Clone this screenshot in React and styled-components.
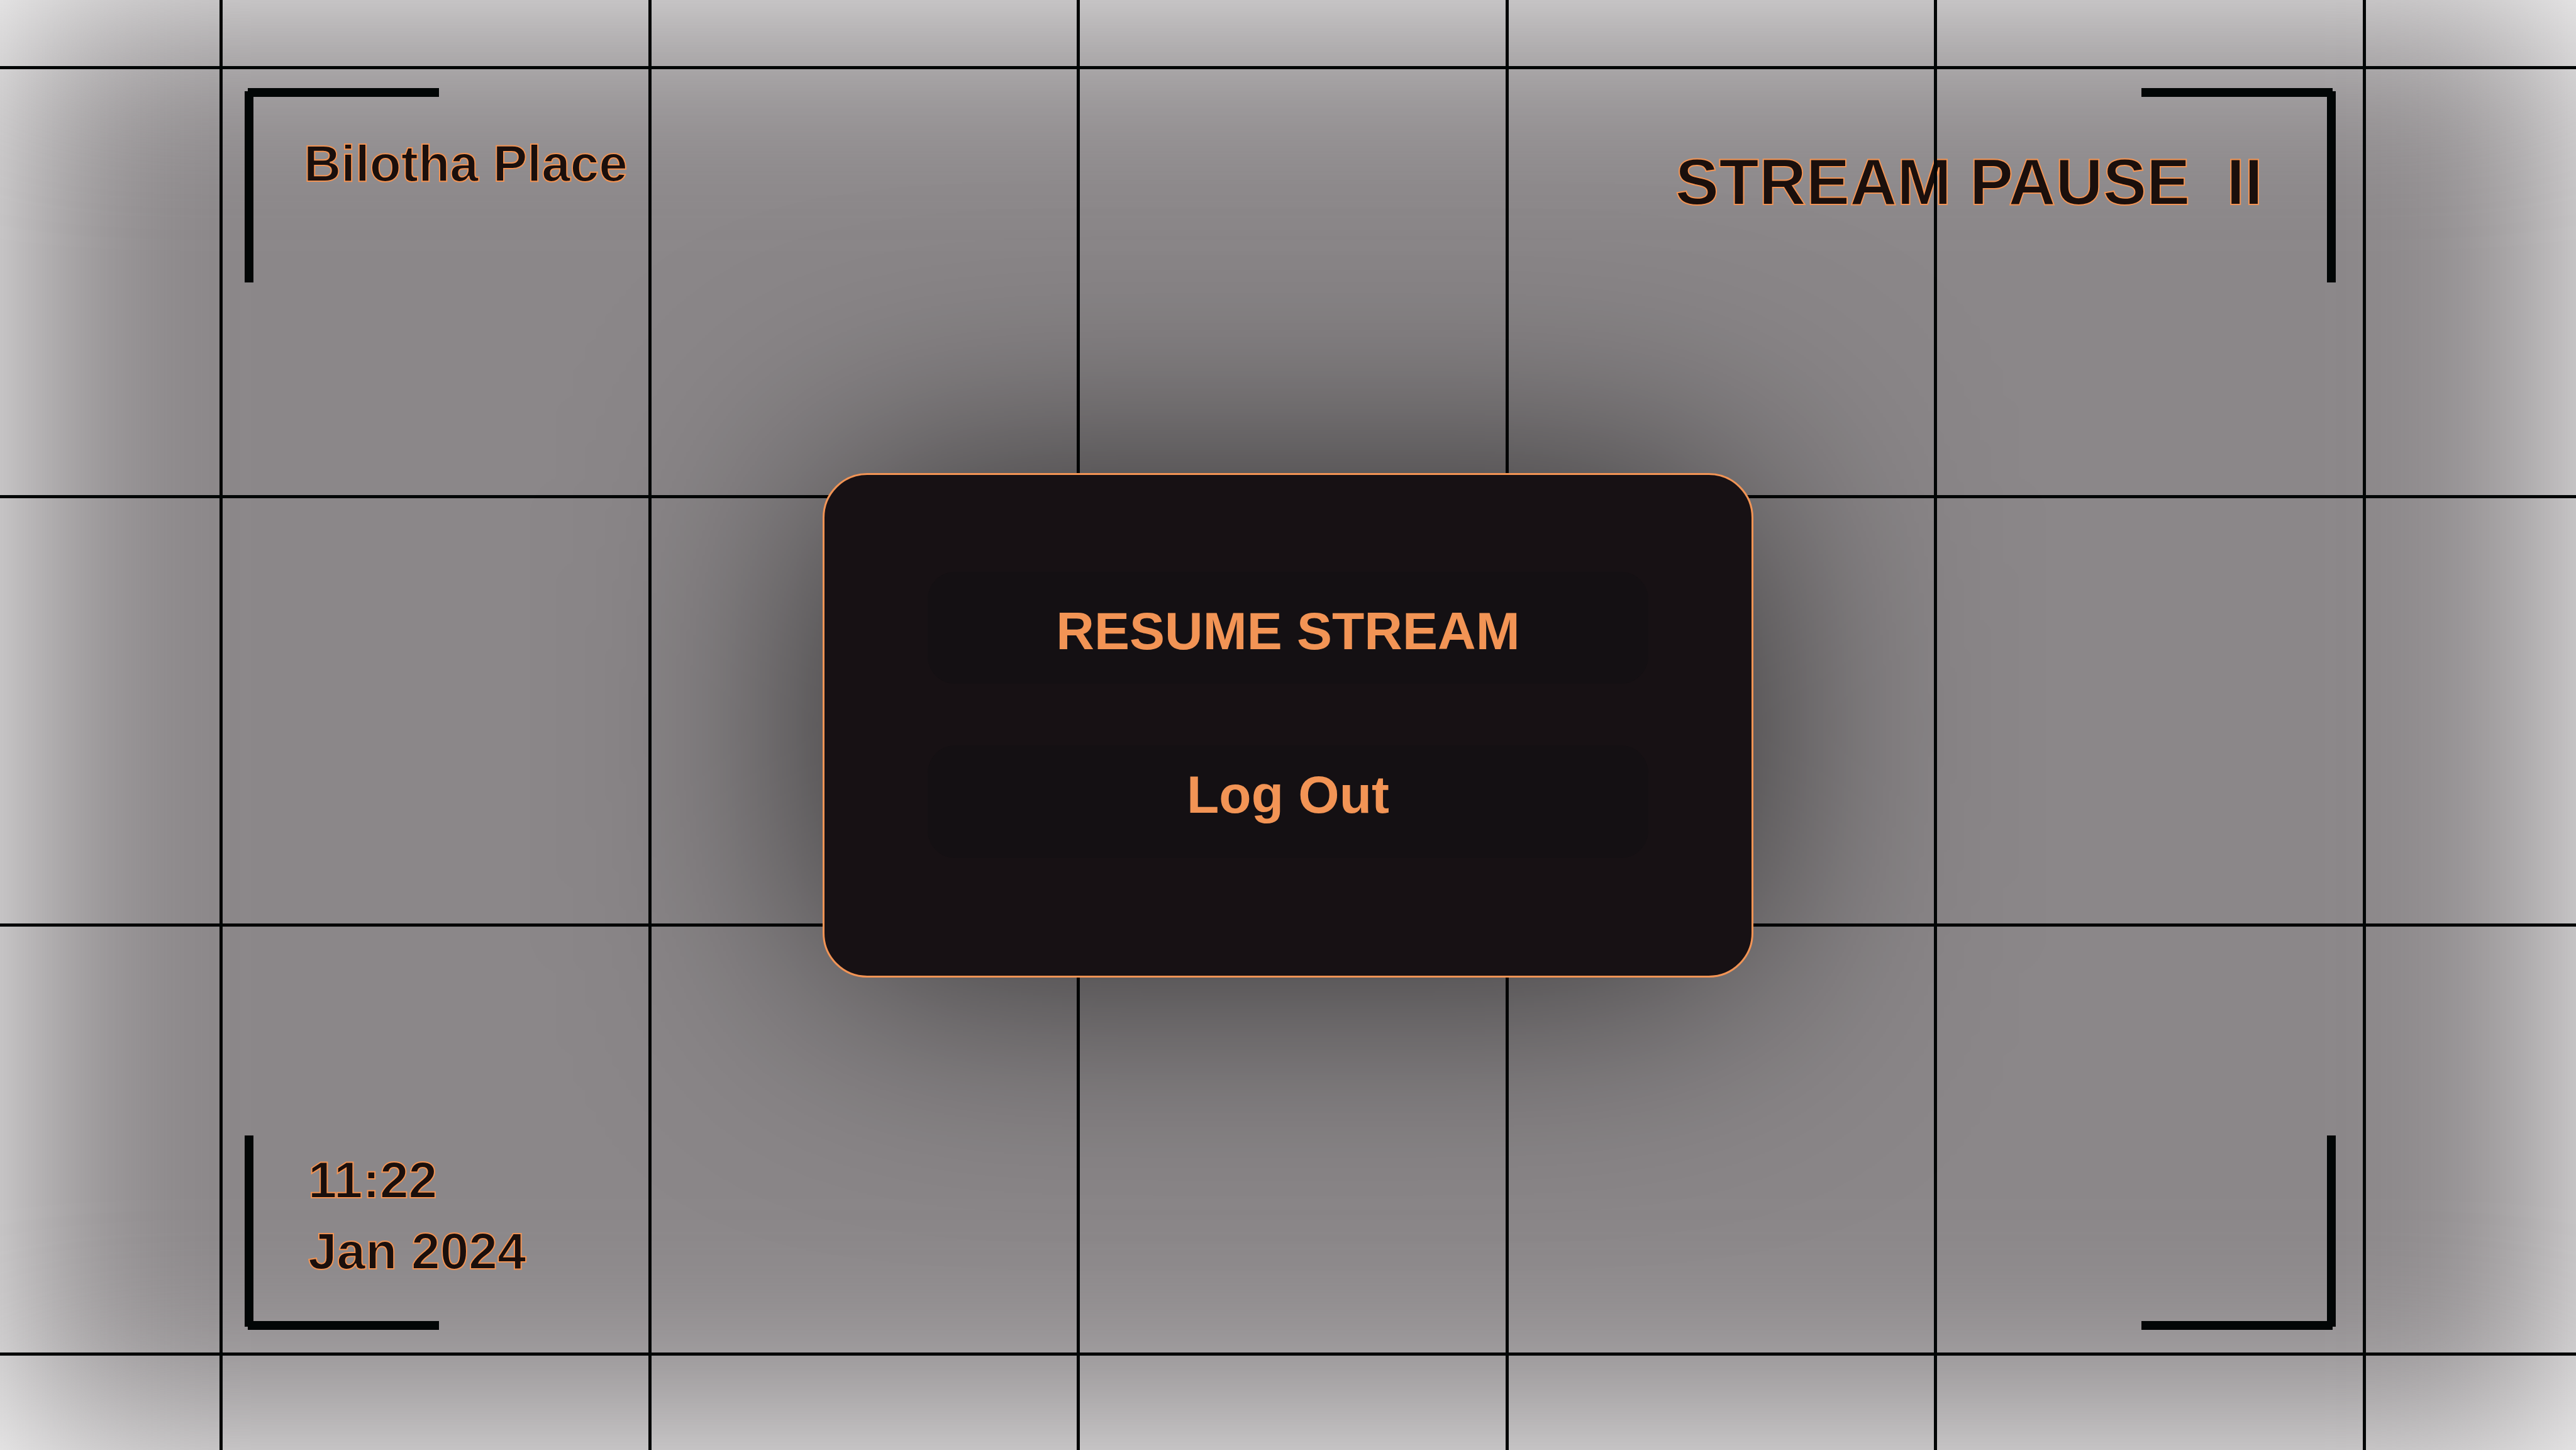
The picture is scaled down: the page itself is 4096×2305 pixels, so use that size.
import React from "react";
import styled, { createGlobalStyle } from "styled-components";

const color = {
  ink: "#020606",
  text: "#1a0f0c",
  accent: "#f29455",
  backdrop: "#8b8789",
  card: "#171114",
  button: "#141013",
};

const GlobalStyle = createGlobalStyle`
  *, *::before, *::after { box-sizing: border-box; }
  body {
    margin: 0;
    font-family: "Liberation Sans", Arial, sans-serif;
    font-weight: 700;
  }
  h1, p { margin: 0; font-size: inherit; font-weight: inherit; }
`;

const Page = styled.main`
  display: grid;
  min-height: 100vh;
  overflow: hidden;
  background: #fff;

  > * {
    grid-area: 1 / 1;
  }
`;

const Backdrop = styled.div`
  background: ${color.backdrop};
  filter: blur(165px);
`;

const Hud = styled.div`
  position: relative;
  display: flex;
  flex-direction: column;
  justify-content: space-between;
  padding: 140px 382px 191px 389px;
`;

const HudRow = styled.div`
  display: flex;
  justify-content: space-between;
`;

const Corner = styled.section`
  display: grid;
  justify-items: ${(p) => (p.$side === "right" ? "end" : "start")};

  > * {
    grid-area: 1 / 1;
  }
`;

const BracketSvg = styled.svg`
  display: block;
  width: 309px;
  height: 309px;
  fill: ${color.ink};
`;

const OutlinedText = styled.div`
  color: ${color.text};
  -webkit-text-stroke: 2px ${color.accent};
  white-space: pre;
`;

const PlaceName = styled(OutlinedText).attrs({ as: "p" })`
  padding: 72px 0 0 94px;
  font-size: 82px;
  line-height: 96px;
`;

const Status = styled(OutlinedText).attrs({ as: "h1" })`
  padding: 89px 116px 0 0;
  font-size: 104px;
  line-height: 120px;
`;

const Clock = styled(OutlinedText)`
  display: flex;
  flex-direction: column;
  align-self: end;
  padding: 0 0 69px 101px;
  font-size: 82px;
  line-height: 113px;
`;

const Lines = styled.div`
  position: relative;
  display: flex;
  flex-direction: ${(p) => (p.$rows ? "column" : "row")};
  justify-content: space-between;
  padding: ${(p) => (p.$rows ? "105px 0 150px" : "0 334px 0 349px")};
  pointer-events: none;
`;

const Line = styled.span`
  flex: 0 0 5px;
  background: ${color.ink};
`;

const CardArea = styled.div`
  position: relative;
  place-self: center;
  width: 1480px;

  &::before {
    content: "";
    position: absolute;
    inset: 0;
    border-radius: 71px;
    background: rgba(0, 0, 0, 0.67);
    filter: blur(200px);
  }
`;

const Card = styled.div`
  position: relative;
  display: flex;
  flex-direction: column;
  gap: 98px;
  padding: 154px 164px 187px;
  border: 3px solid ${color.accent};
  border-radius: 71px;
  background: ${color.card};
`;

const MenuButton = styled.button`
  padding: ${(p) => (p.$primary ? "46px 0 36px" : "30px 0 53px")};
  border: 0;
  border-radius: 44px;
  background: ${color.button};
  color: ${color.accent};
  font: inherit;
  font-size: 84px;
  line-height: 96px;
  cursor: pointer;
`;

const flips = {
  topLeft: undefined,
  topRight: "translate(309 0) scale(-1 1)",
  bottomLeft: "translate(0 309) scale(1 -1)",
  bottomRight: "translate(309 309) scale(-1 -1)",
};

function Bracket({ at }) {
  return (
    <BracketSvg viewBox="0 0 309 309" aria-hidden="true">
      <g transform={flips[at]}>
        <rect x="5" y="0" width="304" height="14" />
        <rect x="0" y="5" width="14" height="304" />
      </g>
    </BracketSvg>
  );
}

function GridLines({ count, rows }) {
  return (
    <Lines $rows={rows} aria-hidden="true">
      {Array.from({ length: count }, (_, i) => (
        <Line key={i} />
      ))}
    </Lines>
  );
}

export default function App() {
  return (
    <>
      <GlobalStyle />
      <Page>
        <Backdrop />
        <Hud>
          <HudRow>
            <Corner>
              <Bracket at="topLeft" />
              <PlaceName>Bilotha Place</PlaceName>
            </Corner>
            <Corner $side="right">
              <Bracket at="topRight" />
              <Status>{"STREAM PAUSE  II"}</Status>
            </Corner>
          </HudRow>
          <HudRow>
            <Corner>
              <Bracket at="bottomLeft" />
              <Clock>
                <time>11:22</time>
                <time dateTime="2024-01">Jan 2024</time>
              </Clock>
            </Corner>
            <Corner $side="right">
              <Bracket at="bottomRight" />
            </Corner>
          </HudRow>
        </Hud>
        <GridLines count={6} />
        <GridLines count={4} rows />
        <CardArea>
          <Card>
            <MenuButton type="button" $primary>
              RESUME STREAM
            </MenuButton>
            <MenuButton type="button">Log Out</MenuButton>
          </Card>
        </CardArea>
      </Page>
    </>
  );
}
